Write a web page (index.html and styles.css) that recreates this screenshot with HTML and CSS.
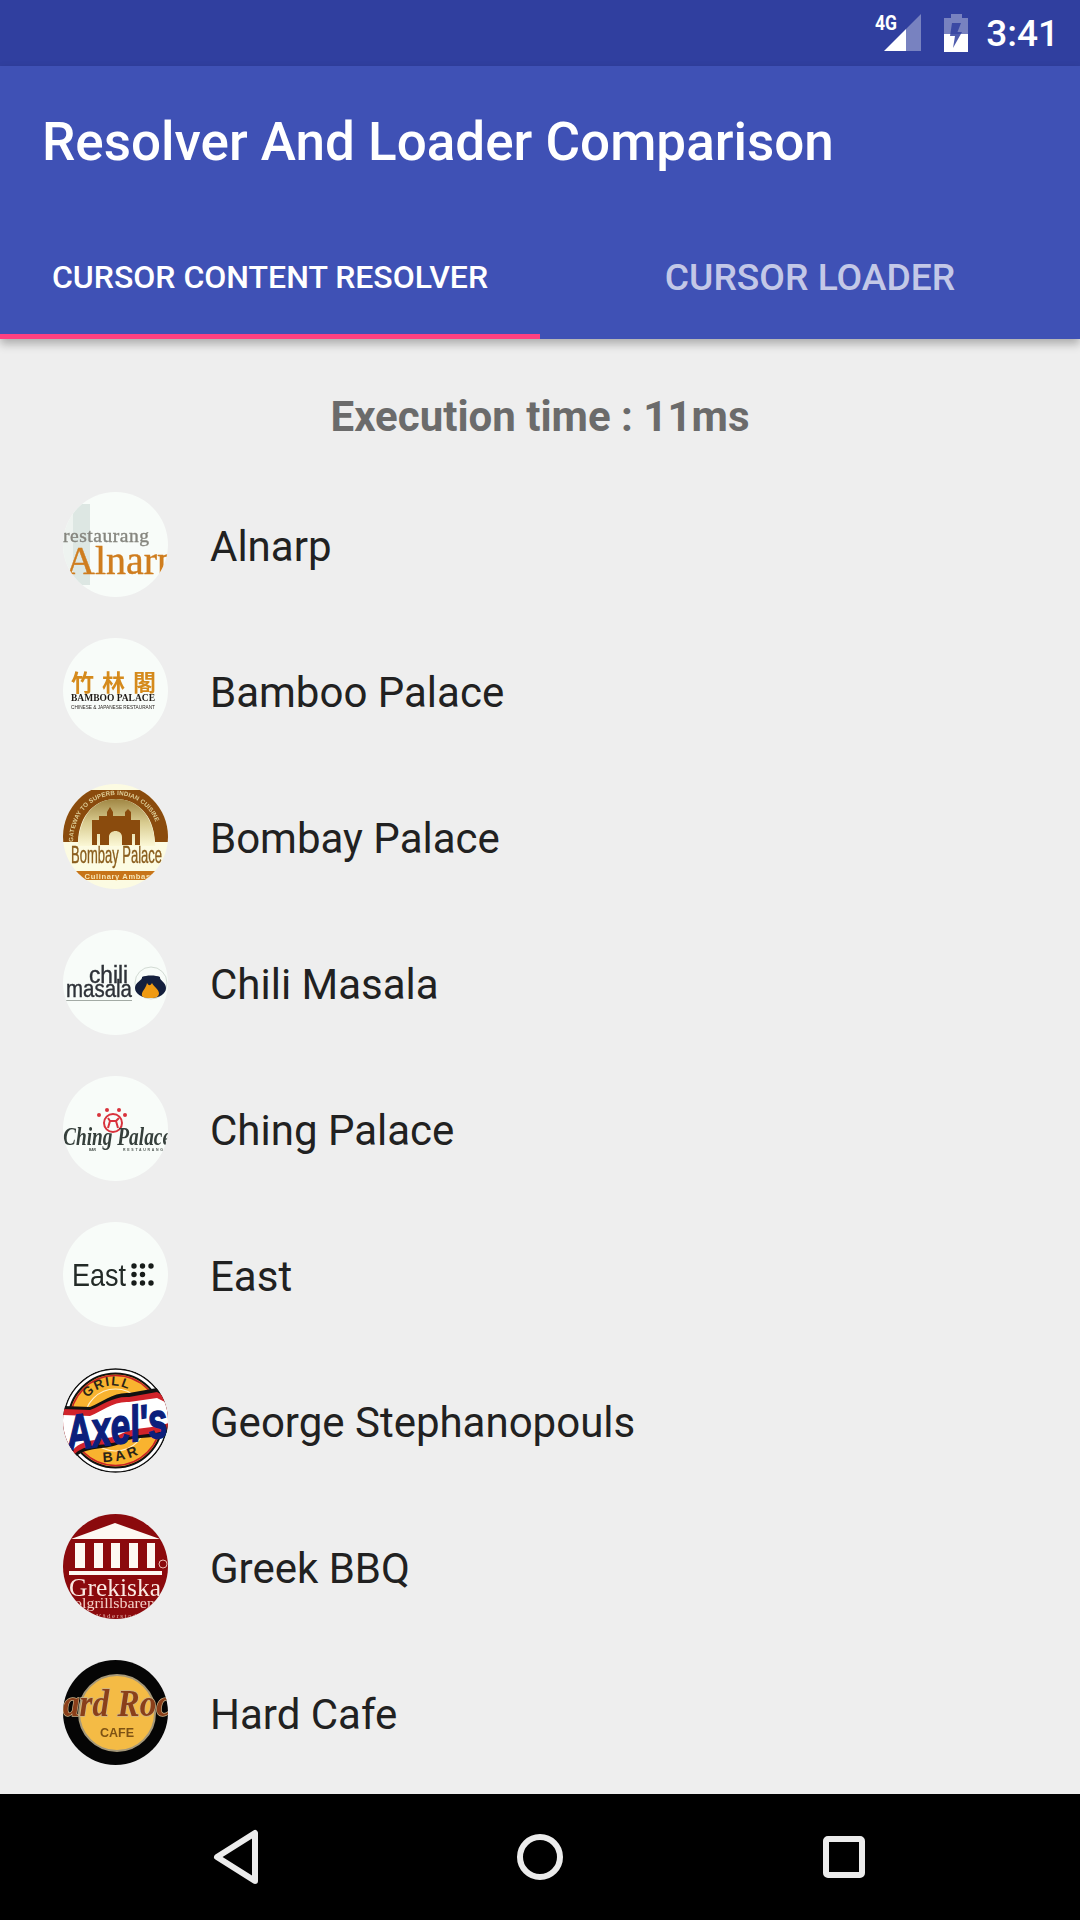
FILE: index.html
```html
<!DOCTYPE html>
<html lang="en">
<head>
<meta charset="utf-8">
<title>Resolver And Loader Comparison</title>
<link rel="stylesheet" href="styles.css">
</head>
<body>
<div class="screen">
  <header class="status">
    <svg class="ic-signal" viewBox="0 0 48 40" aria-hidden="true">
      <path class="dim" d="M46 1V38H31V16Z"/>
      <path class="full" d="M31 16V38H9Z"/>
      <text x="0" y="17" class="net" textLength="22" lengthAdjust="spacingAndGlyphs">4G</text>
    </svg>
    <svg class="ic-batt" viewBox="0 0 24 38" aria-hidden="true">
      <path class="dim" d="M7 0H18V4H24V20H0V4H7Z"/>
      <path class="full" d="M0 20H24V38H0Z"/>
      <path class="bolt" d="M8 9H17L13.500 18H18L9 34L11 22H6Z"/>
    </svg>
    <span class="clock">3:41</span>
  </header>
  <div class="appbar">
    <h1 class="title">Resolver And Loader Comparison</h1>
    <nav class="tabs">
      <div class="tab tab-on">CURSOR CONTENT RESOLVER</div>
      <div class="tab tab-off">CURSOR LOADER</div>
    </nav>
  </div>
  <main class="content">
    <p class="exec">Execution time : 11ms</p>
    <ul class="list">
      <li class="row">
        <svg class="logo soft" viewBox="0 0 105 105">
          <rect width="105" height="105" fill="#f8fcf9"/>
          <rect x="0" y="12" width="27" height="81" fill="#eef3f0"/>
          <rect x="10" y="12" width="17" height="81" fill="#dde7e3"/>
          <text x="0" y="50" class="serif heavy" font-size="19.500" fill="#86867f" stroke="#86867f" textLength="86">restaurang</text>
          <text x="3" y="82" class="serif heavy" font-size="40" fill="#cf7d1e" stroke="#cf7d1e">Alnarp</text>
        </svg>
        <span class="name">Alnarp</span>
      </li>
      <li class="row">
        <svg class="logo soft" viewBox="0 0 105 105">
          <rect width="105" height="105" fill="#f8fcf9"/>
          <text x="8" y="53" class="cjk bamboo" font-size="23" textLength="85">竹林閣</text>
          <text x="8" y="63" class="serif bold" font-size="10.500" fill="#1f1a17" textLength="84" lengthAdjust="spacingAndGlyphs">BAMBOO PALACE</text>
          <text x="8" y="71" class="sans" font-size="5" fill="#2a2522" textLength="84" lengthAdjust="spacingAndGlyphs">CHINESE &amp; JAPANESE RESTAURANT</text>
        </svg>
        <span class="name">Bamboo Palace</span>
      </li>
      <li class="row">
        <svg class="logo soft" viewBox="0 0 105 105">
          <defs>
            <linearGradient id="bomb" x1="0" y1="0" x2="0" y2="1">
              <stop offset="0" stop-color="#a08643"/><stop offset=".5" stop-color="#d8cb8f"/><stop offset="1" stop-color="#fbf8d6"/>
            </linearGradient>
            <path id="bombarc" d="M10 58C11 26 32 11 53 11S96 26 96 58"/>
          </defs>
          <rect width="105" height="105" fill="#fcfbe2"/>
          <path d="M0 58V6H105V58H92C91 30 73 15 53 15S16 30 15 58Z" fill="#8a4b0d"/>
          <path d="M15 62C16 30 33 15 53 15S91 30 92 62Z" fill="url(#bomb)"/>
          <text class="sans bold" font-size="6.200" fill="#dfcf98"><textPath href="#bombarc" textLength="122">GATEWAY TO SUPERB INDIAN CUISINE</textPath></text>
          <path d="M29 61V36H36V32H44V28L47 23L50 28V32H62V28L65 25L68 28V36H77V61H72V50H69V61H59V53C59 45 46 45 46 53V61H37V50H34V61Z" fill="#8a4b0d"/>
          <text x="8" y="79" class="sans heavy" font-size="24" fill="#8a5d1c" stroke="#8a5d1c" textLength="91" lengthAdjust="spacingAndGlyphs">Bombay Palace</text>
          <rect y="87" width="105" height="9" fill="#c77419"/>
          <text x="14" y="94.500" class="sans bold" font-size="7.600" fill="#f6e6b6" textLength="78">s Culinary Ambass</text>
        </svg>
        <span class="name">Bombay Palace</span>
      </li>
      <li class="row">
        <svg class="logo soft" viewBox="0 0 105 105">
          <rect width="105" height="105" fill="#f8fcf9"/>
          <circle cx="88" cy="53" r="16" fill="none" stroke="#b9c4bb" stroke-width=".6"/>
          <path d="M79 47C83 45 93 45 97 47C96 50 103 52 103 58C103 64 96 68 88 68C79 68 72 64 72 58C72 52 80 50 79 47Z" fill="#141f3d"/>
          <path d="M79 66C78 61 83 59 84 53C86 56 87 56 89 53C91 57 96 59 96 64C95 67 93 68 88 68C84 68 81 68 79 66Z" fill="#ef9a12"/>
          <text x="26" y="53" class="sans heavy" font-size="23" fill="#2e3238" stroke="#2e3238" textLength="39" lengthAdjust="spacingAndGlyphs">chili</text>
          <text x="3" y="67" class="sans heavy" font-size="23" fill="#2e3238" stroke="#2e3238" textLength="66" lengthAdjust="spacingAndGlyphs">masala</text>
          <rect x="3" y="70" width="66" height="1" fill="#a3aaa5"/>
        </svg>
        <span class="name">Chili Masala</span>
      </li>
      <li class="row">
        <svg class="logo soft" viewBox="0 0 105 105">
          <rect width="105" height="105" fill="#f8fcf9"/>
          <g fill="#d9323c">
            <circle cx="36" cy="39" r="2"/><circle cx="44" cy="34" r="2"/><circle cx="56" cy="34" r="2"/><circle cx="62" cy="39" r="2"/>
          </g>
          <circle cx="50" cy="47" r="9" fill="none" stroke="#d9323c" stroke-width="2"/>
          <path d="M45 52L47 45H53L55 52M47 45L45 42M53 45L56 42" fill="none" stroke="#d9323c" stroke-width="2"/>
          <text x="0" y="69" class="serif bold italic" font-size="25" fill="#353f3b" textLength="108" lengthAdjust="spacingAndGlyphs">Ching Palace</text>
          <text x="26" y="75" class="sans bold" font-size="3.500" fill="#4c5550" textLength="7">BAR</text>
          <text x="60" y="75" class="sans bold" font-size="3.500" fill="#4c5550" textLength="40">RESTAURANG</text>
        </svg>
        <span class="name">Ching Palace</span>
      </li>
      <li class="row">
        <svg class="logo soft" viewBox="0 0 105 105">
          <rect width="105" height="105" fill="#f8fcf9"/>
          <text x="9" y="64" class="sans" font-size="32" fill="#232a27" textLength="54" lengthAdjust="spacingAndGlyphs">East</text>
          <g fill="#171c1a">
            <circle cx="71" cy="44" r="2.700"/><circle cx="79.500" cy="44" r="2.700"/><circle cx="88" cy="44" r="2.700"/>
            <circle cx="71" cy="52.500" r="2.700"/><circle cx="79.500" cy="52.500" r="2.700"/>
            <circle cx="71" cy="61" r="2.700"/><circle cx="79.500" cy="61" r="2.700"/><circle cx="88" cy="61" r="2.700"/>
          </g>
        </svg>
        <span class="name">East</span>
      </li>
      <li class="row">
        <svg class="logo" viewBox="0 0 105 105">
          <defs>
            <path id="grill" d="M24 30Q46 8 72 25"/>
            <path id="barc" d="M40 94Q62 94 85 82"/>
          </defs>
          <circle cx="52.500" cy="52.500" r="52.500" fill="#fff"/>
          <circle cx="52.500" cy="52.500" r="51.500" fill="none" stroke="#111" stroke-width="1.500"/>
          <circle cx="52.500" cy="52.500" r="47" fill="#f9b32f" stroke="#111" stroke-width="2"/>
          <circle cx="52.500" cy="52.500" r="45" fill="none" stroke="#c62127" stroke-width="1.500"/>
          <circle cx="52.500" cy="52" r="31" fill="none" stroke="#fff0c8" stroke-width="1.200"/>
          <text class="sans bold" font-size="13" fill="#2a2418" letter-spacing="1.500"><textPath href="#grill">GRILL</textPath></text>
          <text class="sans bold" font-size="14" fill="#2a2418" letter-spacing="3"><textPath href="#barc">BAR</textPath></text>
          <path d="M-2 38L27 39C40 34 50 24 66 25L94 20L106 28V64C90 72 72 68 60 74C44 84 22 76 10 92L-2 76Z" fill="#111"/>
          <path d="M-2 41L27 42C40 37 50 28 66 29L94 24L106 31V61C90 68 72 65 60 71C44 80 22 73 10 88L-2 73Z" fill="#d1232a"/>
          <path d="M-2 47L27 48C40 43 50 33 66 34L94 30L106 36V55C90 61 72 59 60 65C44 74 22 68 10 82L-2 66Z" fill="#fff"/>
          <text x="2" y="76" class="sans bold italic axel" font-size="50" textLength="102" lengthAdjust="spacingAndGlyphs" transform="rotate(-8 52 55)">Axel's</text>
        </svg>
        <span class="name">George Stephanopouls</span>
      </li>
      <li class="row">
        <svg class="logo soft" viewBox="0 0 105 105">
          <rect width="105" height="105" fill="#8b0a0d"/>
          <path d="M8 25L52 9L97 25Z" fill="#fdf8f2"/>
          <g fill="#fdf8f2">
            <rect x="12" y="29" width="10" height="25"/><rect x="31" y="29" width="9" height="25"/><rect x="48" y="29" width="9" height="25"/><rect x="66" y="29" width="9" height="25"/><rect x="84" y="29" width="8" height="25"/>
            <rect x="6" y="57" width="93" height="4"/>
          </g>
          <circle cx="100" cy="50" r="4" fill="none" stroke="#e9b9b0" stroke-width="1"/>
          <text x="6" y="82" class="serif" font-size="26" fill="#fbe9e2" textLength="92" lengthAdjust="spacingAndGlyphs">Grekiska</text>
          <text x="11" y="94" class="serif" font-size="15" fill="#f3cfc6" textLength="81" lengthAdjust="spacingAndGlyphs">olgrillsbaren</text>
          <text x="33" y="104" class="serif" font-size="7" fill="#e6b5ac" textLength="40">Väderstad</text>
        </svg>
        <span class="name">Greek BBQ</span>
      </li>
      <li class="row">
        <svg class="logo soft" viewBox="0 0 105 105">
          <rect width="105" height="105" fill="#050505"/>
          <circle cx="54" cy="53" r="38" fill="#f4bb45" stroke="#a59879" stroke-width="2"/>
          <text x="0" y="56" class="serif bold italic hard" font-size="38" textLength="108" lengthAdjust="spacingAndGlyphs">ard Roc</text>
          <text x="37" y="77" class="sans bold" font-size="12.500" fill="#7d5214" textLength="34">CAFE</text>
        </svg>
        <span class="name">Hard Cafe</span>
      </li>
    </ul>
  </main>
  <footer class="navbar">
    <svg class="nav-ic" viewBox="0 0 50 56" aria-hidden="true"><path d="M44 4V52L6 28Z"/></svg>
    <svg class="nav-ic" viewBox="0 0 50 56" aria-hidden="true"><circle cx="25" cy="28" r="20"/></svg>
    <svg class="nav-ic" viewBox="0 0 50 56" aria-hidden="true"><rect x="7" y="10" width="36" height="36" rx="2"/></svg>
  </footer>
</div>
</body>
</html>
```

FILE: styles.css
```css
* { box-sizing: border-box; }
html, body { margin: 0; padding: 0; }
body { width: 1080px; height: 1920px; overflow: hidden; background: #eeeeee; font-family: Roboto, "Noto Sans", sans-serif; }
.screen { width: 1080px; height: 1920px; display: flex; flex-direction: column; }

.status { height: 66px; background: #303f9f; display: flex; align-items: center; justify-content: flex-end; color: #fff; flex: none; padding-right: 21px; }
.ic-signal { width: 48px; height: 40px; margin-right: 21px; margin-top: -1px; }
.ic-batt { width: 24px; height: 38px; margin-right: 18px; }
.dim { fill: rgba(255,255,255,.35); }
.full { fill: #fff; }
.bolt { fill: #303f9f; opacity: .85; }
.net { font: 700 20px Roboto, sans-serif; fill: #fff; }
.clock { font: 500 37px/1 Roboto, sans-serif; }

.appbar { background: #3f51b5; flex: none; height: 273px; display: flex; flex-direction: column; position: relative; z-index: 1; box-shadow: 0 5px 9px rgba(0,0,0,.28); }
.title { margin: 0; height: 144px; padding: 51px 0 0 42px; font: 500 53px/50px Roboto, sans-serif; color: #fff; }
.tabs { flex: 1; display: flex; }
.tab { flex: 1 1 50%; display: flex; align-items: center; justify-content: center; font-weight: 500; padding: 9px 0 5px; }
.tab-on { color: #fff; font-size: 32px; box-shadow: inset 0 -5px 0 #ff4081; }
.tab-off { color: rgba(255,255,255,.7); font-size: 37.200px; }

.content { flex: 1; min-height: 0; padding-top: 53px; overflow: hidden; }
.exec { margin: 0; text-align: center; font: 700 42px/50px Roboto, sans-serif; color: #6b6b6b; }
.list { list-style: none; margin: 50px 0 0; padding: 0; display: flex; flex-direction: column; gap: 41px; }
.row { display: flex; align-items: center; padding-left: 63px; gap: 42px; height: 105px; }
.logo { width: 105px; height: 105px; border-radius: 50%; flex: none; display: block; }
.soft { filter: blur(.35px); }
.name { font-size: 42px; line-height: 50px; padding-top: 4px; color: #212121; }

.serif { font-family: "Liberation Serif", serif; }
.sans { font-family: "Liberation Sans", sans-serif; }
.cjk { font-family: "Noto Sans CJK TC", "Noto Sans CJK SC", sans-serif; }
.bold { font-weight: 700; }
.italic { font-style: italic; }
.heavy { stroke-width: .4px; }
.bamboo { fill: #d58a1c; font-weight: 700; }
.axel { fill: #0c1f7c; stroke: #0c1f7c; stroke-width: 1.600px; }
.hard { fill: #8a3f1a; stroke: #c9b48a; stroke-width: 1.500px; paint-order: stroke; }

.navbar { height: 126px; flex: none; background: #000; display: flex; align-items: center; justify-content: center; gap: 254px; }
.nav-ic { width: 50px; height: 56px; fill: none; stroke: #ececec; stroke-width: 6px; stroke-linejoin: round; }
```
